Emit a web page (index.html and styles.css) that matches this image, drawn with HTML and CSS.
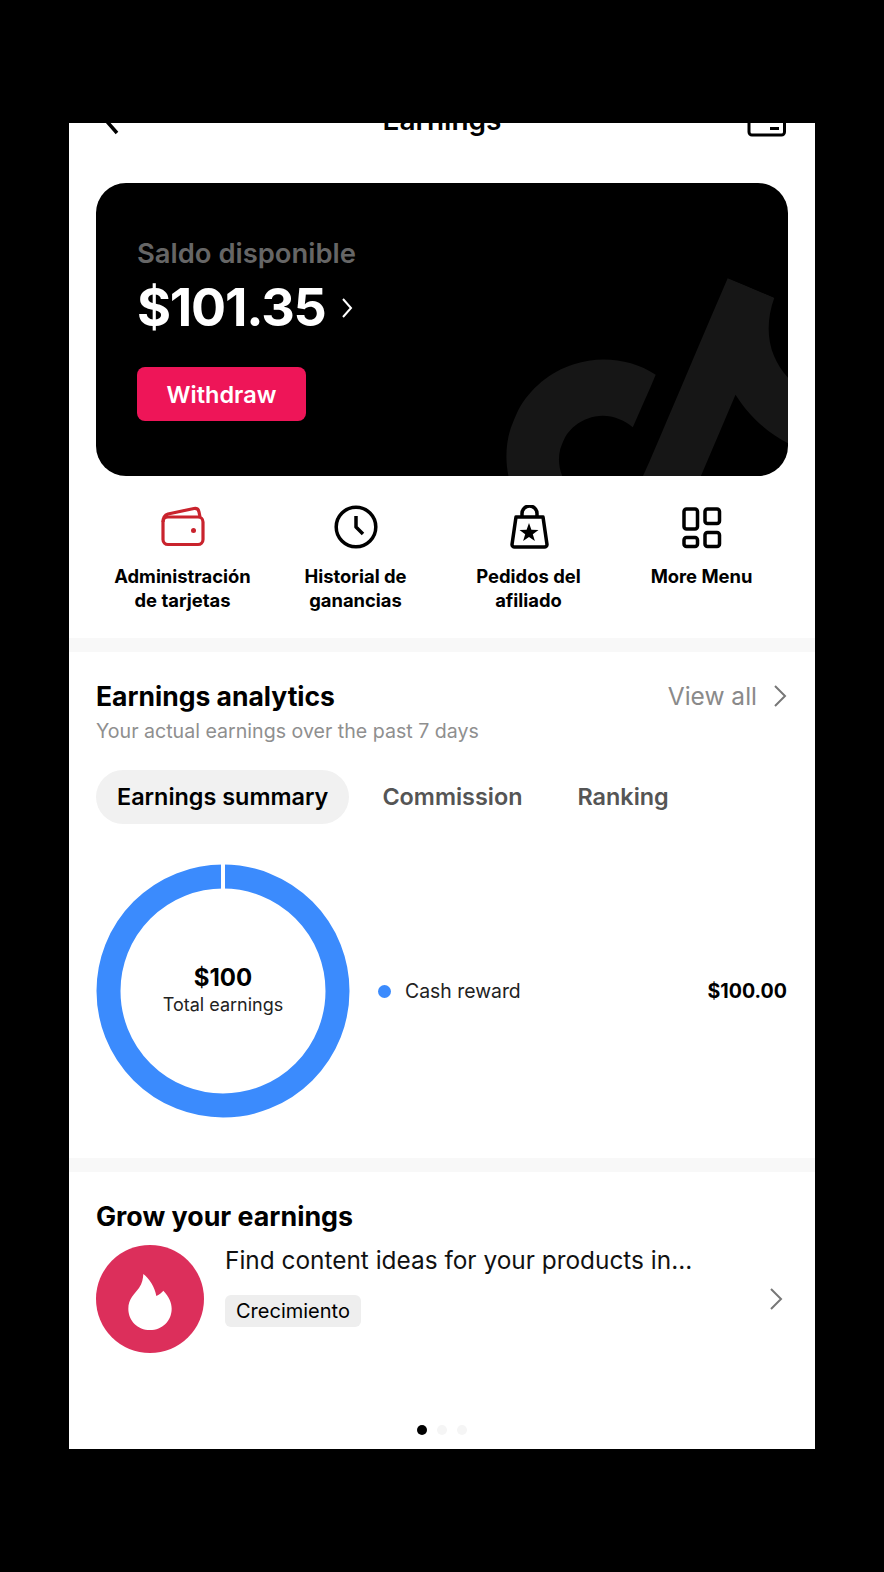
FILE: index.html
```html
<!DOCTYPE html>
<html lang="es">
<head>
  <meta charset="UTF-8" />
  <meta name="viewport" content="width=device-width, initial-scale=1.0" />
  <title>Earnings</title>
  <link rel="stylesheet" href="styles.css">
</head>
<body>
  <div class="screen">
    <header class="top-bar">
      <svg class="back-icon" viewBox="0 0 40 40"><path d="M19 1L5 17L19 33"/></svg>
      <div class="top-title">Earnings</div>
      <svg class="wallet-top" viewBox="0 0 40 40"><rect x="3" y="3" width="35.500" height="32" rx="3"/><rect x="24" y="27" width="9" height="3" class="solid"/></svg>
    </header>

    <section class="balance-card">
      <svg class="watermark" viewBox="0 0 24 24"><path d="M12.525.02c1.31-.02 2.61-.01 3.91-.02.08 1.53.63 3.09 1.75 4.17 1.12 1.11 2.7 1.62 4.24 1.79v4.03c-1.44-.05-2.89-.35-4.2-.97-.57-.26-1.1-.59-1.62-.93-.01 2.92.01 5.84-.02 8.75-.08 1.4-.54 2.79-1.35 3.94-1.31 1.92-3.58 3.17-5.91 3.21-1.43.08-2.86-.31-4.08-1.03-2.02-1.19-3.44-3.37-3.65-5.71-.02-.5-.03-1-.01-1.49.18-1.9 1.12-3.72 2.58-4.96 1.66-1.44 3.98-2.13 6.15-1.72.02 1.48-.04 2.96-.04 4.44-.99-.32-2.15-.23-3.02.37-.63.41-1.11 1.04-1.36 1.75-.21.51-.15 1.07-.14 1.61.24 1.64 1.82 3.02 3.5 2.87 1.12-.01 2.19-.66 2.77-1.61.19-.33.4-.67.41-1.06.1-1.79.06-3.57.07-5.36.01-4.03-.01-8.05.02-12.07z"/></svg>
      <div class="balance-label">Saldo disponible</div>
      <div class="balance-row">
        <span class="balance-value">$101.35</span>
        <svg class="balance-arrow" viewBox="0 0 12 24"><path d="M2 3L10 12L2 21"/></svg>
      </div>
      <button class="withdraw">Withdraw</button>
    </section>

    <nav class="quick-menu">
      <div class="quick-item">
        <svg class="quick-icon red" viewBox="0 0 48 44"><rect x="4" y="12" width="40" height="27.500" rx="5"/><path d="M4 17C4 12 6 10 9 9L35 3.500C38 3 39.500 4.500 40 7L41 12"/><circle cx="34.500" cy="25.500" r="2.500" class="solid"/></svg>
        <span>Administración<br>de tarjetas</span>
      </div>
      <div class="quick-item">
        <svg class="quick-icon" viewBox="0 0 48 44"><circle cx="24" cy="22" r="19.800"/><path d="M24 11V22L31 29"/></svg>
        <span>Historial de<br>ganancias</span>
      </div>
      <div class="quick-item">
        <svg class="quick-icon" viewBox="0 0 44 44"><path d="M9 12H36L40 39.500a2.500 2.500 0 0 1-2.500 2.500H7.500a2.500 2.500 0 0 1-2.500-2.500Z"/><path d="M15 12V8.500a7.500 7.500 0 0 1 15 0V12"/><path class="solid" d="M22 18L24.400 24.800L31.500 24.900L25.800 29.200L27.900 36.100L22 32L16.100 36.100L18.200 29.200L12.500 24.900L19.600 24.800Z"/></svg>
        <span>Pedidos del<br>afiliado</span>
      </div>
      <div class="quick-item">
        <svg class="quick-icon" viewBox="0 0 44 44"><rect x="4" y="4" width="13.500" height="20" rx="2.500"/><rect x="25" y="4" width="14.500" height="14.500" rx="2.500"/><rect x="4" y="32.500" width="13.500" height="9" rx="2.500"/><rect x="25" y="27.500" width="14.500" height="14" rx="2.500"/></svg>
        <span>More Menu</span>
      </div>
    </nav>

    <div class="divider"></div>

    <section class="analytics">
      <div class="section-head">
        <h2>Earnings analytics</h2>
        <a class="view-all">View all <svg class="chevron" viewBox="0 0 14 24"><path d="M2 2L12 12L2 22"/></svg></a>
      </div>
      <p class="section-sub">Your actual earnings over the past 7 days</p>
      <div class="tabs">
        <div class="tab active">Earnings summary</div>
        <div class="tab">Commission</div>
        <div class="tab">Ranking</div>
      </div>
      <div class="chart-row">
        <div class="donut">
          <svg viewBox="0 0 254 254"><circle cx="127" cy="127" r="114.500"/><rect x="125" y="0" width="4" height="26"/></svg>
          <div class="donut-label">
            <strong>$100</strong>
            <span>Total earnings</span>
          </div>
        </div>
        <div class="legend">
          <i class="legend-dot"></i>
          <span class="legend-name">Cash reward</span>
          <strong class="legend-value">$100.00</strong>
        </div>
      </div>
    </section>

    <div class="divider"></div>

    <section class="grow">
      <h2 class="grow-head">Grow your earnings</h2>
      <div class="grow-row">
        <div class="grow-icon">
          <svg viewBox="0 0 130 168"><path d="M45 0C62 12 80 40 84 66C92 62 100 56 105 50C122 68 130 86 130 104C130 140 102 168 65 168C28 168 0 140 0 104C0 76 18 60 32 42C42 28 44 14 45 0Z"/></svg>
        </div>
        <div class="grow-text">
          <div class="grow-title">Find content ideas for your products in...</div>
          <span class="grow-tag">Crecimiento</span>
        </div>
        <svg class="chevron" viewBox="0 0 14 24"><path d="M2 2L12 12L2 22"/></svg>
      </div>
      <div class="pager">
        <i class="on"></i><i></i><i></i>
      </div>
    </section>
  </div>
</body>
</html>
```

FILE: styles.css
```css
* { box-sizing: border-box; }
body {
  margin: 0;
  background: #000;
  font-family: "Inter", "Roboto", sans-serif;
  color: #000;
}
.screen {
  width: 746px;
  height: 1326px;
  margin: 123px 0 0 69px;
  background: #fff;
  overflow: hidden;
}
h2 {
  margin: 0;
  font-size: 26.500px;
  line-height: 32px;
  font-weight: 700;
}
svg { display: block; }

/* header is cut off by the top of the frame */
.top-bar {
  display: flex;
  align-items: center;
  justify-content: space-between;
  height: 50px;
  margin-top: -28px;
  padding: 0 29px;
}
.back-icon {
  width: 40px;
  height: 40px;
  fill: none;
  stroke: #000;
  stroke-width: 3.500;
}
.top-title {
  font-size: 28px;
  font-weight: 600;
}
.wallet-top {
  width: 40px;
  height: 40px;
  fill: none;
  stroke: #000;
  stroke-width: 3;
}
.wallet-top .solid { fill: #000; stroke: none; }

.balance-card {
  position: relative;
  height: 293px;
  margin: 38px 27px 0;
  padding: 52px 41px 0;
  background: #000;
  border-radius: 30px;
  overflow: hidden;
}
.watermark {
  position: absolute;
  left: 410px;
  top: 80px;
  width: 310px;
  height: 310px;
  fill: #161616;
  transform: rotate(23deg);
}
.balance-label {
  font-size: 27.400px;
  line-height: 36px;
  font-weight: 600;
  color: #666;
}
.balance-row {
  display: flex;
  align-items: center;
  gap: 14px;
  margin-top: 5px;
}
.balance-value {
  font-size: 52px;
  line-height: 64px;
  font-weight: 700;
  letter-spacing: -1.200px;
  color: #fff;
}
.balance-arrow {
  width: 14px;
  height: 24px;
  fill: none;
  stroke: #fff;
  stroke-width: 2;
}
.withdraw {
  display: block;
  position: relative;
  width: 169px;
  height: 54px;
  margin-top: 27px;
  border: none;
  border-radius: 8px;
  background: #ee1558;
  color: #fff;
  font: 600 23.500px "Inter", "Roboto", sans-serif;
}

.quick-menu {
  display: grid;
  grid-template-columns: repeat(4, 1fr);
  height: 162px;
  margin: 0 27px;
  padding-top: 29px;
}
.quick-item {
  display: flex;
  flex-direction: column;
  align-items: center;
  text-align: center;
  font-size: 18.400px;
  line-height: 24px;
  font-weight: 700;
}
.quick-item span { margin-top: 15px; }
.quick-icon {
  height: 44px;
  fill: none;
  stroke: #000;
  stroke-width: 3.500;
  stroke-linejoin: round;
}
.quick-icon .solid { fill: #000; stroke: none; }
.quick-icon.red { stroke: #c9232d; stroke-width: 3.200; }
.quick-icon.red .solid { fill: #c9232d; }

.divider {
  height: 14px;
  background: #f8f8f8;
}

.analytics {
  height: 506px;
  padding: 28px 28px 0 27px;
}
.section-head {
  display: flex;
  align-items: center;
  justify-content: space-between;
}
.view-all {
  display: flex;
  align-items: center;
  gap: 16px;
  font-size: 24.500px;
  color: #8a8a8a;
}
.chevron {
  width: 14px;
  height: 24px;
  fill: none;
  stroke: #777;
  stroke-width: 2;
}
.section-sub {
  margin: 6px 0 0;
  font-size: 19.600px;
  line-height: 26px;
  color: #8f8f8f;
}
.tabs {
  display: flex;
  align-items: center;
  gap: 33px;
  margin-top: 26px;
}
.tab {
  font-size: 23.400px;
  line-height: 54px;
  font-weight: 600;
  color: #555;
}
.tab.active {
  padding: 0 21px;
  background: #f1f1f1;
  border-radius: 27px;
  color: #000;
}
.tab:last-child { margin-left: 22px; }
.chart-row {
  display: flex;
  align-items: center;
  margin-top: 40px;
}
.donut {
  position: relative;
  flex: none;
  width: 254px;
  height: 254px;
}
.donut circle {
  fill: none;
  stroke: #3b8bfd;
  stroke-width: 24;
}
.donut rect { fill: #fff; }
.donut-label {
  position: absolute;
  inset: 0;
  display: flex;
  flex-direction: column;
  align-items: center;
  justify-content: center;
  padding-bottom: 2px;
}
.donut-label strong {
  font-size: 24px;
  line-height: 30px;
  font-weight: 700;
}
.donut-label span {
  font-size: 18px;
  line-height: 24px;
  color: #222;
}
.legend {
  flex: 1;
  display: flex;
  align-items: center;
  margin-left: 28px;
}
.legend-dot {
  width: 13px;
  height: 13px;
  border-radius: 50%;
  background: #3b8bfd;
}
.legend-name {
  margin-left: 14px;
  font-size: 19.400px;
  color: #222;
}
.legend-value {
  margin-left: auto;
  font-size: 19.600px;
  font-weight: 700;
}

.grow {
  padding: 28px 27px 0;
}
.grow-head { font-size: 26.800px; }
.grow-row {
  display: flex;
  align-items: center;
  margin-top: 13px;
}
.grow-icon {
  display: flex;
  align-items: center;
  justify-content: center;
  width: 108px;
  height: 108px;
  border-radius: 50%;
  background: #dc2f5b;
}
.grow-icon svg {
  width: 44px;
  height: 56px;
  margin-top: 6px;
  fill: #fff;
}
.grow-text {
  flex: 1;
  align-self: flex-start;
  margin-left: 21px;
}
.grow-title {
  font-size: 24.400px;
  line-height: 30px;
  color: #111;
}
.grow-tag {
  display: inline-block;
  margin-top: 20px;
  padding: 0 11px;
  background: #eee;
  border-radius: 6px;
  font-size: 20px;
  line-height: 32px;
}
.grow-row .chevron {
  margin-right: 5px;
}
.pager {
  display: flex;
  justify-content: center;
  gap: 10px;
  margin-top: 72px;
}
.pager i {
  width: 10px;
  height: 10px;
  border-radius: 50%;
  background: #f5f5f5;
}
.pager i.on { background: #000; }
```
